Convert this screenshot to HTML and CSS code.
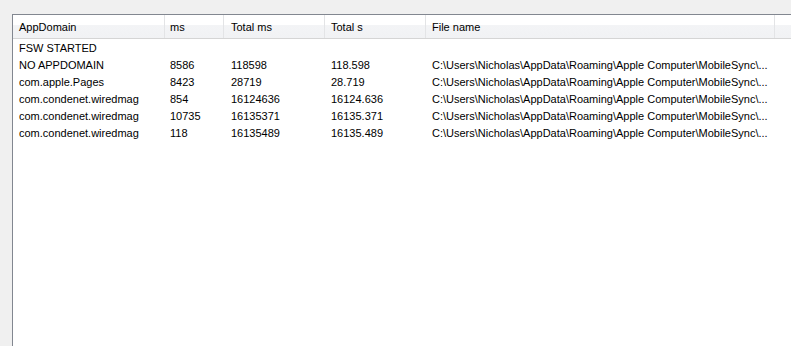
FILE: index.html
```html
<!DOCTYPE html>
<html lang="en">
<head>
    <meta charset="UTF-8">
    <title>AppDomain log</title>
    <link rel="stylesheet" href="styles.css">
</head>
<body>
    <div class="listview">
        <div class="header">
            <div class="col c1">AppDomain</div>
            <div class="col c2">ms</div>
            <div class="col c3">Total ms</div>
            <div class="col c4">Total s</div>
            <div class="col c5">File name</div>
            <div class="col filler"></div>
        </div>
        <div class="rows">
            <div class="row">
                <div class="cell c1">FSW STARTED</div>
                <div class="cell c2"></div>
                <div class="cell c3"></div>
                <div class="cell c4"></div>
                <div class="cell c5"></div>
            </div>
            <div class="row">
                <div class="cell c1">NO APPDOMAIN</div>
                <div class="cell c2">8586</div>
                <div class="cell c3">118598</div>
                <div class="cell c4">118.598</div>
                <div class="cell c5">C:\Users\Nicholas\AppData\Roaming\Apple Computer\MobileSync\...</div>
            </div>
            <div class="row">
                <div class="cell c1">com.apple.Pages</div>
                <div class="cell c2">8423</div>
                <div class="cell c3">28719</div>
                <div class="cell c4">28.719</div>
                <div class="cell c5">C:\Users\Nicholas\AppData\Roaming\Apple Computer\MobileSync\...</div>
            </div>
            <div class="row">
                <div class="cell c1">com.condenet.wiredmag</div>
                <div class="cell c2">854</div>
                <div class="cell c3">16124636</div>
                <div class="cell c4">16124.636</div>
                <div class="cell c5">C:\Users\Nicholas\AppData\Roaming\Apple Computer\MobileSync\...</div>
            </div>
            <div class="row">
                <div class="cell c1">com.condenet.wiredmag</div>
                <div class="cell c2">10735</div>
                <div class="cell c3">16135371</div>
                <div class="cell c4">16135.371</div>
                <div class="cell c5">C:\Users\Nicholas\AppData\Roaming\Apple Computer\MobileSync\...</div>
            </div>
            <div class="row">
                <div class="cell c1">com.condenet.wiredmag</div>
                <div class="cell c2">118</div>
                <div class="cell c3">16135489</div>
                <div class="cell c4">16135.489</div>
                <div class="cell c5">C:\Users\Nicholas\AppData\Roaming\Apple Computer\MobileSync\...</div>
            </div>
        </div>
    </div>
</body>
</html>
```

FILE: styles.css
```css
html, body {
    height: 100%;
}
body {
    margin: 0;
    padding: 14px 0 0 12px;
    box-sizing: border-box;
    background: #f0f0f0;
    font-family: "Liberation Sans", Arial, sans-serif;
    font-size: 11px;
    color: #000;
    overflow: hidden;
}
.listview {
    height: 100%;
    background: #fff;
    border-top: 1px solid #828790;
    border-left: 1px solid #828790;
}
.header, .row {
    display: grid;
    grid-template-columns: 152px 59px 101px 101px 349px 1fr;
}
.header {
    height: 23px;
    background: linear-gradient(#fff 0, #fff 10px, #f3f4f6 10px, #f1f2f4 100%);
    border-bottom: 1px solid #d5d5d5;
}
.col, .cell {
    display: flex;
    align-items: center;
    padding-left: 6px;
    white-space: nowrap;
    overflow: hidden;
}
.col {
    border-right: 1px solid #e3e4e6;
}
.col.filler {
    border-right: none;
}
.c2 {
    padding-left: 5px;
}
.c3 {
    padding-left: 7px;
}
.row {
    height: 17px;
}
```
